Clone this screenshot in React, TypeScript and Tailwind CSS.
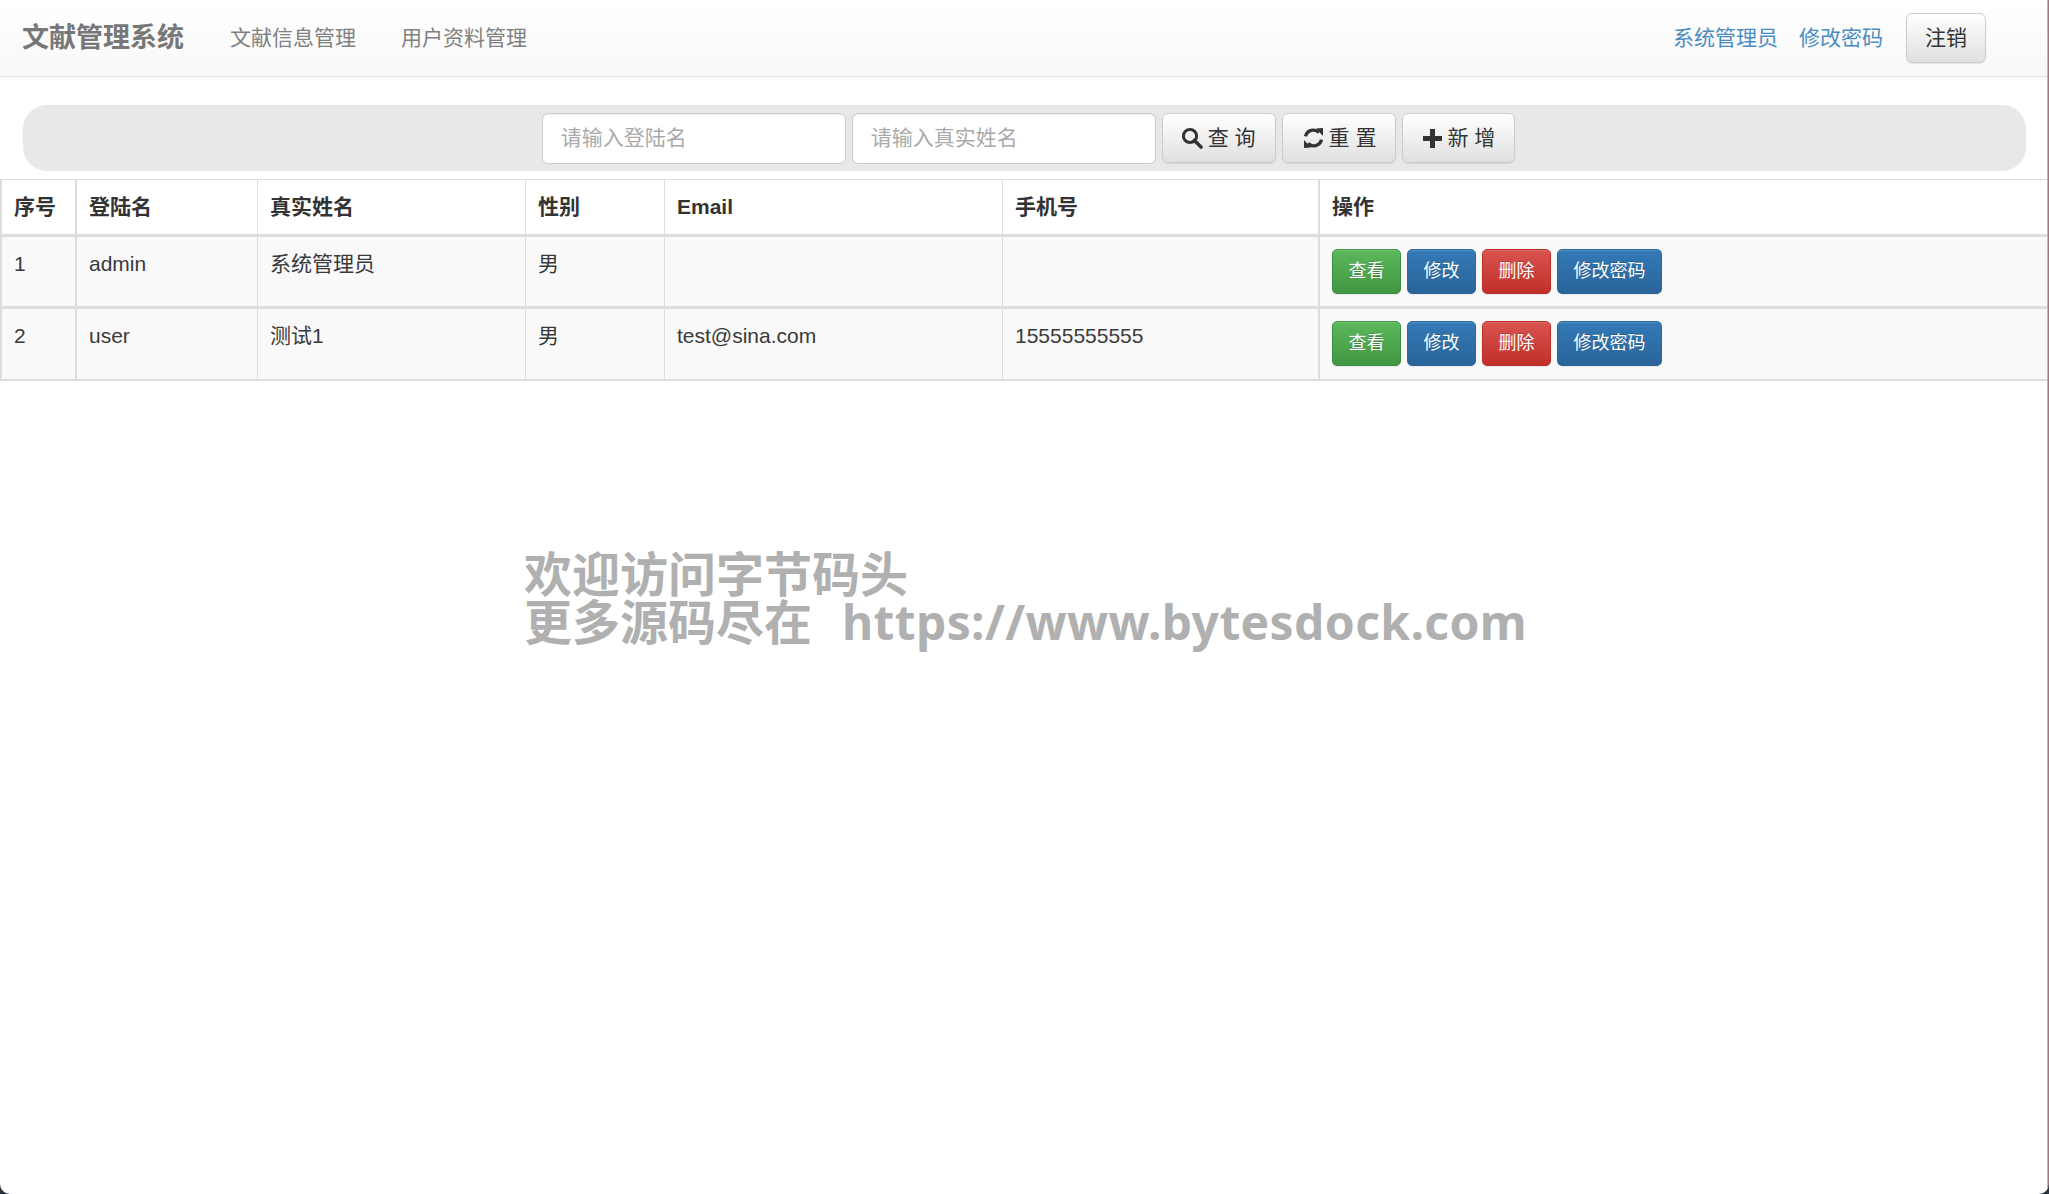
import { ReactNode } from "react";

const font = "font-['Liberation_Sans','Noto_Sans_CJK_SC',sans-serif]";

const baseBtn =
  "border rounded-[6px] text-[21px] leading-[30px] px-[19px] py-[9px] text-[#333] border-[#ccc] bg-gradient-to-b from-white to-[#e0e0e0] shadow-[inset_0_1px_0_rgba(255,255,255,0.15),0_1px_1px_rgba(0,0,0,0.08)] flex items-center whitespace-pre";

const smallBtn: Record<string, string> = {
  green: "from-[#5cb85c] to-[#419641] border-[#3e8f3e]",
  blue: "from-[#337ab7] to-[#29649a] border-[#2b679c]",
  red: "from-[#d9534f] to-[#c12e2a] border-[#b92c28]",
};

function SearchIcon() {
  return (
    <svg width="22" height="22" viewBox="0 0 22 22" className="-ml-[1px] mr-[5px] shrink-0">
      <circle cx="9" cy="9" r="6.6" fill="none" stroke="#333" strokeWidth="3" />
      <path d="M13.5 13.5L20 20" stroke="#333" strokeWidth="3.6" strokeLinecap="round" />
    </svg>
  );
}

function RefreshIcon() {
  return (
    <svg width="23" height="22" viewBox="0 0 22 22" className="mr-[4px] shrink-0">
      <path d="M3 9.4A8.2 8.2 0 0 1 16.6 5.4" fill="none" stroke="#333" strokeWidth="3.4" />
      <path d="M13.5 1.5L20.5 1L20.5 9Z" fill="#333" />
      <path d="M19 12.6A8.2 8.2 0 0 1 5.4 16.6" fill="none" stroke="#333" strokeWidth="3.4" />
      <path d="M8.5 20.5L1.5 21L1.5 13Z" fill="#333" />
    </svg>
  );
}

function PlusIcon() {
  return (
    <svg width="21" height="21" viewBox="0 0 21 21" className="mr-[4px] shrink-0">
      <path d="M8 1h5v7h7v5h-7v7H8v-7H1V8h7z" fill="#333" />
    </svg>
  );
}

function SmallButton({ color, children }: { color: string; children: ReactNode }) {
  return (
    <button
      className={`border rounded-[5px] text-[18px] leading-[27px] px-[15.5px] py-[8px] text-white bg-gradient-to-b [text-shadow:0_-1px_0_rgba(0,0,0,0.2)] shadow-[inset_0_1px_0_rgba(255,255,255,0.15),0_1px_1px_rgba(0,0,0,0.08)] ${smallBtn[color]}`}
    >
      {children}
    </button>
  );
}

function Actions() {
  return (
    <div className="flex gap-[6px]">
      <SmallButton color="green">查看</SmallButton>
      <SmallButton color="blue">修改</SmallButton>
      <SmallButton color="red">删除</SmallButton>
      <SmallButton color="blue">修改密码</SmallButton>
    </div>
  );
}

const th = "text-left font-bold text-[21px] leading-[30px] px-[12px] pt-[12px] pb-[12px] border-r border-t border-[#ddd] border-b-[3px] align-bottom";
const td = "text-[21px] leading-[30px] px-[12px] pt-[12px] border-r border-[#ddd] align-top text-[#3a3a3a]";

const rows = [
  { id: "1", login: "admin", name: "系统管理员", sex: "男", email: "", phone: "", edge: "border-b-[3px] pb-[12px]" },
  { id: "2", login: "user", name: "测试1", sex: "男", email: "test@sina.com", phone: "15555555555", edge: "border-b-2 pb-[13px]" },
];

export default function App() {
  return (
    <div className={`${font} relative min-h-[1194px] bg-white text-[#333] overflow-hidden`}>
      <nav className="h-[77px] border-b border-[#e7e7e7] bg-gradient-to-b from-white to-[#f8f8f8] flex items-center pl-[22px] pr-[63px] shadow-[0_1px_5px_rgba(0,0,0,0.05)]">
        <span className="text-[27px] font-bold text-[#777]">文献管理系统</span>
        <a className="ml-[46px] text-[21px] text-[#808080]">文献信息管理</a>
        <a className="ml-[45px] text-[21px] text-[#808080]">用户资料管理</a>
        <a className="ml-auto text-[21px] text-[#4a8cc2]">系统管理员</a>
        <a className="ml-[21px] text-[21px] text-[#4a8cc2]">修改密码</a>
        <button className={`${baseBtn} ml-[23px] !px-[18px]`}>注销</button>
      </nav>

      <div className="mx-[23px] mt-[28px] mb-[8px] h-[66px] rounded-[24px] bg-[#e8e8e8] flex items-center justify-center gap-[6px] pl-[8px]">
        <input
          placeholder="请输入登陆名"
          className="w-[304px] h-[51px] rounded-[6px] border border-[#ccc] bg-white px-[18px] text-[21px] placeholder:text-[#aaa] shadow-[inset_0_1px_1px_rgba(0,0,0,0.075)]"
        />
        <input
          placeholder="请输入真实姓名"
          className="w-[304px] h-[51px] rounded-[6px] border border-[#ccc] bg-white px-[18px] text-[21px] placeholder:text-[#aaa] shadow-[inset_0_1px_1px_rgba(0,0,0,0.075)]"
        />
        <button className={baseBtn}>
          <SearchIcon />查 询
        </button>
        <button className={baseBtn}>
          <RefreshIcon />重 置
        </button>
        <button className={baseBtn}>
          <PlusIcon />新 增
        </button>
      </div>

      <table className="w-full table-fixed border-separate border-spacing-0 border-l-2 border-[#ddd]">
        <colgroup>
          <col className="w-[75px]" />
          <col className="w-[181px]" />
          <col className="w-[268px]" />
          <col className="w-[139px]" />
          <col className="w-[338px]" />
          <col className="w-[316px]" />
          <col />
        </colgroup>
        <thead>
          <tr>
            <th className={`${th} border-r-2`}>序号</th>
            <th className={th}>登陆名</th>
            <th className={th}>真实姓名</th>
            <th className={th}>性别</th>
            <th className={th}>Email</th>
            <th className={th}>手机号</th>
            <th className={`${th} border-l`}>操作</th>
          </tr>
        </thead>
        <tbody>
          {rows.map((r) => (
            <tr key={r.id} className="bg-[#f9f9f9]">
              <td className={`${td} border-r-2 ${r.edge}`}>{r.id}</td>
              <td className={`${td} ${r.edge}`}>{r.login}</td>
              <td className={`${td} ${r.edge}`}>{r.name}</td>
              <td className={`${td} ${r.edge}`}>{r.sex}</td>
              <td className={`${td} ${r.edge}`}>{r.email}</td>
              <td className={`${td} ${r.edge}`}>{r.phone}</td>
              <td className={`${td} border-l ${r.edge}`}>
                <Actions />
              </td>
            </tr>
          ))}
        </tbody>
      </table>

      {/* watermark sits over the page */}
      <div className="absolute left-[524px] top-[550px] text-[48px] leading-[48px] font-bold text-[#b0b0b0] whitespace-pre font-['Noto_Sans','Noto_Sans_CJK_SC',sans-serif]">
        <div>欢迎访问字节码头</div>
        <div>
          更多源码尽在  <span className="ml-[5px] tracking-[0.37px]">https://www.bytesdock.com</span>
        </div>
      </div>

      {/* window edge and rounded bottom corners from the capture */}
      <div className="absolute right-0 top-0 bottom-0 w-[2px] bg-gradient-to-r from-[#e3d3d6] to-[#8a5863]" />
      <svg width="10" height="10" viewBox="0 0 10 10" className="absolute left-0 bottom-0">
        <path d="M0 0A10 10 0 0 0 10 10H0Z" fill="#2c3440" />
      </svg>
      <svg width="10" height="10" viewBox="0 0 10 10" className="absolute right-0 bottom-0">
        <path d="M10 0A10 10 0 0 1 0 10H10Z" fill="#2c3440" />
      </svg>
    </div>
  );
}
